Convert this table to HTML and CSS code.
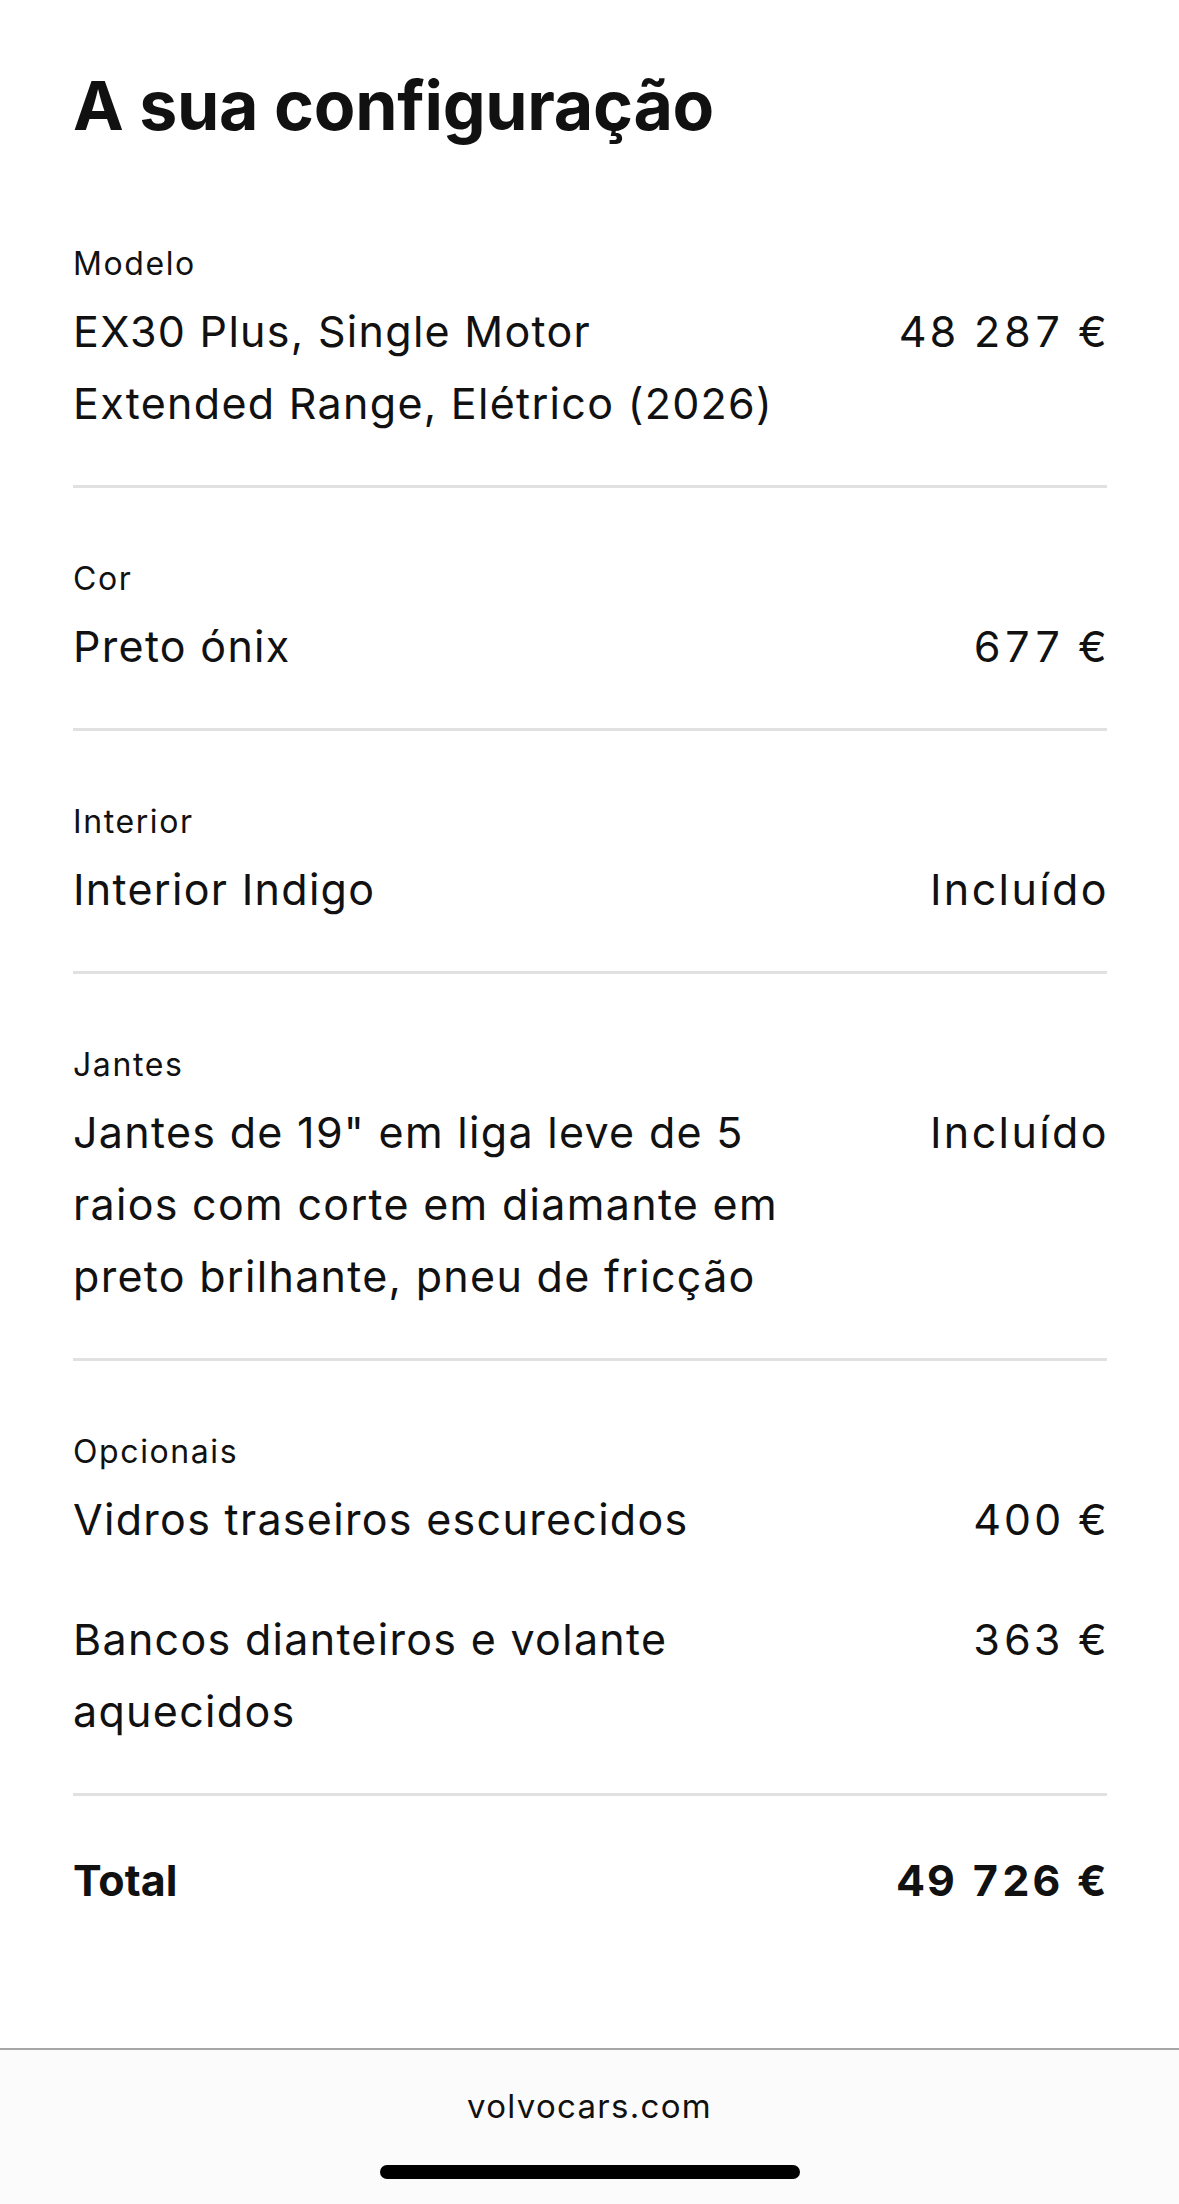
FILE: index.html
```html
<!DOCTYPE html>
<html lang="pt">
<head>
    <meta charset="UTF-8">
    <meta name="viewport" content="width=device-width, initial-scale=1.0">
    <title>A sua configuração - Volvo</title>
    <link rel="stylesheet" href="styles.css">
</head>
<body>
    <main class="summary">
        <h1>A sua configuração</h1>

        <section class="group">
            <p class="group-label">Modelo</p>
            <div class="line">
                <span class="line-name">EX30 Plus, Single Motor Extended Range, Elétrico (2026)</span>
                <span class="line-price">48 287 €</span>
            </div>
        </section>

        <section class="group">
            <p class="group-label">Cor</p>
            <div class="line">
                <span class="line-name">Preto ónix</span>
                <span class="line-price">677 €</span>
            </div>
        </section>

        <section class="group">
            <p class="group-label">Interior</p>
            <div class="line">
                <span class="line-name">Interior Indigo</span>
                <span class="line-price">Incluído</span>
            </div>
        </section>

        <section class="group">
            <p class="group-label">Jantes</p>
            <div class="line">
                <span class="line-name">Jantes de 19" em liga leve de 5 raios com corte em diamante em preto brilhante, pneu de fricção</span>
                <span class="line-price">Incluído</span>
            </div>
        </section>

        <section class="group">
            <p class="group-label">Opcionais</p>
            <div class="line">
                <span class="line-name">Vidros traseiros escurecidos</span>
                <span class="line-price">400 €</span>
            </div>
            <div class="line">
                <span class="line-name">Bancos dianteiros e volante aquecidos</span>
                <span class="line-price">363 €</span>
            </div>
        </section>

        <div class="total">
            <span>Total</span>
            <span class="total-price">49 726 €</span>
        </div>
    </main>

    <footer class="browser-bar">
        <p class="site">volvocars.com</p>
        <div class="home-bar"></div>
    </footer>
</body>
</html>
```

FILE: styles.css
```css
* {
    box-sizing: border-box;
    margin: 0;
    padding: 0;
}

body {
    font-family: Inter, "Noto Sans", sans-serif;
    color: #111;
    background: #fff;
    width: 1179px;
    height: 2204px;
    display: flex;
    flex-direction: column;
}

.summary {
    flex: 1;
    padding: 55px 72px 0 73px;
}

h1 {
    font-size: 68px;
    font-weight: 700;
    line-height: 100px;
    letter-spacing: -0.3px;
    margin-bottom: 18px;
}

.group {
    padding: 71px 0 46px;
    border-bottom: 3px solid #e1e1e1;
}

.group-label {
    font-size: 32px;
    line-height: 40px;
    letter-spacing: 1.6px;
    margin-bottom: 11px;
}

.line {
    display: grid;
    grid-template-columns: 720px 1fr;
    font-size: 43px;
    line-height: 72px;
    letter-spacing: 1.3px;
}

.line + .line {
    margin-top: 48px;
}

.line-price {
    text-align: right;
    font-variant-numeric: tabular-nums;
    letter-spacing: 2.4px;
    margin-right: -2px;
}

.total {
    display: flex;
    justify-content: space-between;
    font-size: 43px;
    font-weight: 700;
    line-height: 72px;
    padding-top: 48px;
}

.total-price {
    font-variant-numeric: tabular-nums;
    letter-spacing: 2.6px;
    margin-right: -2px;
}

.browser-bar {
    height: 156px;
    background: #fbfbfb;
    border-top: 2px solid #a6a6a6;
    display: flex;
    flex-direction: column;
    align-items: center;
}

.site {
    font-size: 33px;
    line-height: 40px;
    letter-spacing: 1.3px;
    margin-top: 36px;
}

.home-bar {
    width: 420px;
    height: 14px;
    border-radius: 7px;
    background: #000;
    margin-top: 39px;
}
```
